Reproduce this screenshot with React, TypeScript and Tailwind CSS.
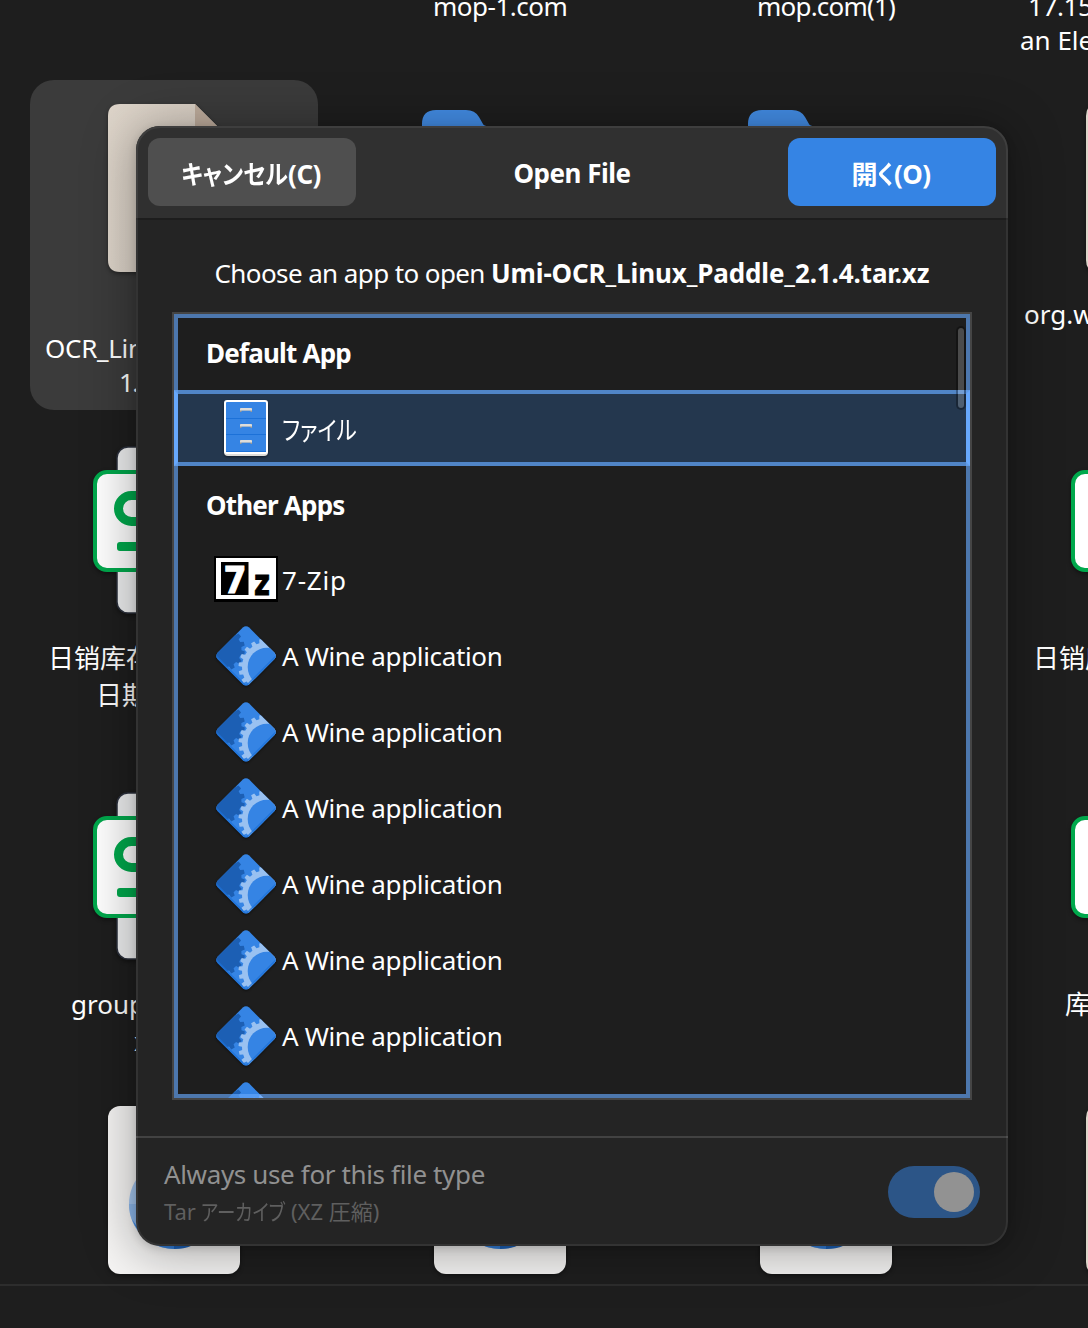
import type { ReactNode } from "react";

function gearPath(cx: number, cy: number, inner: number, outer: number, teeth: number, phase = 0) {
  const step = (Math.PI * 2) / teeth;
  const pts: string[] = [];
  for (let i = 0; i < teeth; i++) {
    const a = i * step + phase;
    const spots: [number, number][] = [
      [inner, a - step * 0.3],
      [outer, a - step * 0.2],
      [outer, a + step * 0.2],
      [inner, a + step * 0.3],
    ];
    for (const [r, t] of spots) {
      pts.push(`${(cx + r * Math.cos(t)).toFixed(2)} ${(cy + r * Math.sin(t)).toFixed(2)}`);
    }
  }
  return `M${pts.join("L")}Z`;
}

const LIGHT_GEAR = gearPath(53, 43, 25, 28.5, 20, 0.1);
const DARK_GEAR = gearPath(9, 25, 18.5, 22, 14, 0.2);
const DIAMOND = "M28.8 3.6Q32 .9 35.2 3.6L60.2 28.6Q63.2 32 60.2 35.2L35.2 60.2Q32 63 28.8 60.2L3.8 35.2Q.8 32 3.8 28.6Z";

function WineIcon() {
  return (
    <svg className="size-16 shrink-0 drop-shadow-[0_1px_1px_rgba(0,0,0,0.5)]" viewBox="0 0 64 64">
      <defs>
        <clipPath id="diamond">
          <path d={DIAMOND} />
        </clipPath>
      </defs>
      <g clipPath="url(#diamond)">
        <rect width="64" height="64" fill="#3584e4" />
        <path d={DARK_GEAR} fill="#1c5fb4" />
        <path d={LIGHT_GEAR} fill="#99c1f1" />
        <circle cx="53" cy="43" r="19.3" fill="#3584e4" />
        <path d="M1 32L32 63L63 32" fill="none" stroke="#1c71d8" strokeOpacity=".75" strokeWidth="3" />
      </g>
    </svg>
  );
}

function SevenZipIcon() {
  return (
    <svg className="size-16 shrink-0" viewBox="0 0 64 64">
      <rect x="0" y="8" width="64" height="46" fill="#000" />
      <rect x="2" y="10" width="60" height="41" fill="#fff" />
      <rect x="7" y="14" width="27.500" height="33" fill="#000" />
      <text x="9.500" y="44.500" fontFamily="DejaVu Sans" fontWeight="700" fontSize="37" textLength="23" lengthAdjust="spacingAndGlyphs" fill="#fff" stroke="#fff">7</text>
      <text x="40" y="46.500" fontFamily="DejaVu Sans" fontWeight="700" fontSize="36" textLength="16" lengthAdjust="spacingAndGlyphs" fill="#000" stroke="#000">z</text>
    </svg>
  );
}

function FilesIcon() {
  return (
    <svg className="size-16 shrink-0 drop-shadow-[0_1px_1px_rgba(0,0,0,0.5)]" viewBox="0 0 64 64">
      <rect x="10" y="6" width="44" height="54" rx="4" fill="#deddda" />
      <rect x="10" y="4" width="44" height="54" rx="3" fill="#fff" />
      <rect x="12" y="6" width="40" height="50" rx="1" fill="#3584e4" />
      <path d="M12 22.500H52M12 38.500H52M12 55.500H52" stroke="#1c71d8" />
      {[12, 28, 44].map((y) => (
        <g key={y}>
          <path d={`M26 ${y + 4}v-3q0-1 1-1h10q1 0 1 1v3h-1.500v-1.500h-9v1.500z`} fill="#9a9996" />
          <path d={`M26 ${y + 2.5}v-1.500q0-1 1-1h10q1 0 1 1v1.500z`} fill="#deddda" />
        </g>
      ))}
    </svg>
  );
}

function BeigePage() {
  return (
    <svg className="h-[168px] w-[132px] drop-shadow-[0_2px_2px_rgba(0,0,0,0.4)]" viewBox="0 0 132 168">
      <defs>
        <linearGradient id="paper" x1="0" y1="0" x2="1" y2="0">
          <stop offset="0" stopColor="#ded5ca" />
          <stop offset="1" stopColor="#d9cfc4" />
        </linearGradient>
      </defs>
      <path d="M12 0H87L132 45V156Q132 168 120 168H12Q0 168 0 156V12Q0 0 12 0Z" fill="url(#paper)" />
      <path d="M87 0L132 45H87Z" fill="#c0ae9e" />
    </svg>
  );
}

function FolderIcon() {
  return (
    <svg className="h-[168px] w-[156px]" viewBox="0 0 156 168">
      <path d="M0 148V20Q0 6 14 6H44Q53 6 57 13L61 20Q62 22 66 22H142Q156 22 156 36V148Q156 160 144 160H12Q0 160 0 148Z" fill="#438de6" />
    </svg>
  );
}

function SheetIcon() {
  return (
    <svg className="h-[168px] w-[162px] drop-shadow-[0_2px_2px_rgba(0,0,0,0.4)]" viewBox="0 0 162 168">
      <rect x="24" y="1" width="114" height="166" rx="11" fill="#eff0f1" stroke="#2c313d" strokeWidth="1.500" />
      <rect x="2" y="26" width="158" height="98" rx="12" fill="#fff" stroke="#00a84c" strokeWidth="4" />
      <path d="M70 49.500H38.500a13 13 0 0 0 0 26H70" fill="none" stroke="#00a84c" strokeWidth="9" />
      <rect x="24" y="96" width="100" height="9" rx="3" fill="#00a84c" />
    </svg>
  );
}

function WebPage() {
  return (
    <svg className="h-[168px] w-[132px] drop-shadow-[0_2px_2px_rgba(0,0,0,0.4)]" viewBox="0 0 132 168">
      <rect width="132" height="168" rx="12" fill="#f6f5f4" />
      <circle cx="66" cy="98" r="45" fill="#a6c8f2" />
      <path d="M21 98a45 45 0 0 0 90 0Z" fill="#8db8ec" />
      <path d="M24 113q3 5 9 13q14 10 33 8v9A45 45 0 0 1 24 113Z" fill="#3584e4" />
      <path d="M66 130h30q-10 13-30 13Z" fill="#1c65c0" />
    </svg>
  );
}

type Line = [string, string];

function Cell({ icon, lines, selected, top = "mt-[26px]" }: { icon: ReactNode; lines: Line[]; selected?: boolean; top?: string }) {
  return (
    <div className={`h-full w-72 shrink-0 rounded-3xl pt-6 ${selected ? "bg-[#3b3b3b]" : ""}`}>
      <div className="flex h-[168px] justify-center">{icon}</div>
      <div className={top}>
        {lines.map(([text, cls]) => (
          <div key={text} className={`whitespace-nowrap ${cls}`}>
            {text}
          </div>
        ))}
      </div>
    </div>
  );
}

function Row({ height, children }: { height: string; children: ReactNode }) {
  return <div className={`flex shrink-0 gap-[38px] pl-[30px] ${height}`}>{children}</div>;
}

function Blank() {
  return <div className="w-72 shrink-0" />;
}

function FileGrid() {
  return (
    <div className="flex h-[1284px] flex-col gap-3 overflow-hidden">
      <Row height="h-[68px]">
        <Blank />
        <div className="-mt-[11px] w-72 shrink-0 pl-[77px] leading-[34px] tracking-[-0.5px]">mop-1.com</div>
        <div className="-mt-[11px] w-72 shrink-0 pl-[75px] leading-[34px] tracking-[-0.8px]">mop.com(1)</div>
        <div className="-mt-[11px] w-72 shrink-0 leading-[34px]">
          <div className="pl-[20px] tracking-[-0.4px]">17.15-Why</div>
          <div className="pl-3">an Electron</div>
        </div>
      </Row>
      <Row height="h-[330px]">
        <Cell
          selected
          icon={<BeigePage />}
          top="mt-[25px]"
          lines={[
            ["Umi-", "pl-[115px] leading-[34px]"],
            ["OCR_Linux_Pa", "pl-[15px] leading-[34px] tracking-[-0.3px]"],
            ["1.4.tar.xz", "pl-[89px] leading-[34px] tracking-[-1.5px]"],
          ]}
        />
        <Cell icon={<FolderIcon />} lines={[]} />
        <Cell icon={<FolderIcon />} lines={[]} />
        <Cell icon={<BeigePage />} top="mt-[25px]" lines={[["org.wine", "pl-[16px] leading-[34px]"]]} />
      </Row>
      <Row height="h-[334px]">
        <Cell icon={<SheetIcon />} lines={[["日销库存表格", "pl-[18px] leading-[37px]"], ["日期表", "pl-[66px] leading-[37px]"]]} />
        <Blank />
        <Blank />
        <Cell icon={<SheetIcon />} lines={[["日销库存", "pl-[25px] leading-[37px]"]]} />
      </Row>
      <Row height="h-[302px]">
        <Cell icon={<SheetIcon />} lines={[["group_export", "pl-[41px] leading-[37px]"], ["xlsx", "pl-[104px] leading-[37px]"]]} />
        <Blank />
        <Blank />
        <Cell icon={<SheetIcon />} lines={[["库存", "pl-[57px] leading-[37px]"]]} />
      </Row>
      <Row height="h-[202px]">
        <Cell icon={<WebPage />} lines={[]} />
        <Cell icon={<WebPage />} lines={[]} />
        <Cell icon={<WebPage />} lines={[]} />
        <Cell icon={<BeigePage />} lines={[]} />
      </Row>
    </div>
  );
}

function Heading({ children }: { children: ReactNode }) {
  return <div className="flex h-[76px] shrink-0 items-center pt-0.5 pl-8 font-bold tracking-[-0.8px]">{children}</div>;
}

function AppRow({ icon, selected, children }: { icon: ReactNode; selected?: boolean; children: ReactNode }) {
  return (
    <div
      className={`flex h-[76px] shrink-0 items-center gap-1 border-4 pl-9 ${
        selected ? "border-x-[#69a8ff] border-y-[#5085c7] bg-[#24374e]" : "border-transparent"
      }`}
    >
      {icon}
      {children}
    </div>
  );
}

/* Kana set with proportional metrics in a condensed width. */
function Kana({ width, scale, children }: { width: string; scale: string; children: string }) {
  return (
    <span className={`inline-block whitespace-nowrap ${width}`}>
      <span className={`inline-block origin-left tracking-normal [font-feature-settings:'palt'] ${scale}`}>{children}</span>
    </span>
  );
}

function OpenDialog() {
  return (
    <div className="absolute top-[126px] left-[136px] flex h-[1120px] w-[872px] flex-col overflow-hidden rounded-3xl bg-[#242424]">
      <header className="flex h-[92px] shrink-0 items-center justify-between bg-[#303030] px-3 font-bold">
        <button className="flex h-[68px] w-52 items-center justify-center rounded-xl bg-[#4f4f4f] pt-1 pr-0.5 tracking-[-0.5px]">
          <Kana width="w-[107px]" scale="scale-x-[0.89]">キャンセル</Kana>(C)
        </button>
        <span className="pt-0.5 tracking-[-0.5px]">Open File</span>
        <button className="flex h-[68px] w-52 items-center justify-center rounded-xl bg-[#3584e4] pt-1 pr-0.5 tracking-[-0.5px]">
          開<Kana width="w-[17px]" scale="scale-x-[0.85]">く</Kana>(O)
        </button>
      </header>
      <div className="h-0.5 shrink-0 bg-[#1d1d1d]" />
      <p className="mt-9 text-center leading-[34px] tracking-[-0.6px] whitespace-nowrap">
        Choose an app to open <b className="tracking-[-0.12px]">Umi-OCR_Linux_Paddle_2.1.4.tar.xz</b>
      </p>
      <div className="relative mx-9 mt-[22px] flex h-[788px] shrink-0 flex-col overflow-hidden border-2 border-[#454545] bg-[#1e1e1e]">
        <Heading>Default App</Heading>
        <AppRow selected icon={<FilesIcon />}>
          <span className="pt-1">
            <Kana width="w-[76px]" scale="scale-x-[0.83]">ファイル</Kana>
          </span>
        </AppRow>
        <Heading>Other Apps</Heading>
        <AppRow icon={<SevenZipIcon />}>
          <span className="tracking-[0.8px]">7-Zip</span>
        </AppRow>
        {[0, 1, 2, 3, 4, 5, 6].map((i) => (
          <AppRow key={i} icon={<WineIcon />}>
            <span className="tracking-[-0.35px]">A Wine application</span>
          </AppRow>
        ))}
        <div className="absolute inset-0 border-4 border-[#67a8fa]/65" />
        <div className="absolute top-3 right-1 h-[84px] w-2.5 rounded-full border-2 border-black/30 bg-white/20 bg-clip-padding" />
      </div>
      <footer className="mt-9 flex flex-1 items-center justify-between border-t-2 border-[#424242] px-7">
        <div>
          <div className="leading-[38px] tracking-[-0.36px] text-[#919191]">Always use for this file type</div>
          <div className="flex text-[22px] leading-9 text-[#5f5f5f]">
            <span className="w-[37px]">Tar</span>
            <Kana width="w-[90px]" scale="scale-x-[0.84]">アーカイブ</Kana>
            <span>(XZ 圧縮)</span>
          </div>
        </div>
        <div className="flex h-[52px] w-[92px] items-center justify-end rounded-full bg-[#2c5587] pr-1.5">
          <div className="size-10 rounded-full bg-[#929292]" />
        </div>
      </footer>
      <div className="pointer-events-none absolute inset-0 rounded-3xl border-2 border-white/7" />
    </div>
  );
}

export default function App() {
  return (
    <div className="relative h-[1328px] w-[1088px] overflow-hidden bg-[#1e1e1e] font-['Noto_Sans','Noto_Sans_CJK_JP',sans-serif] text-[26px] text-white">
      <FileGrid />
      <div className="h-11 border-t-2 border-[#2d2d2d]" />
      <div className="absolute top-[126px] left-[136px] h-[1120px] w-[872px] rounded-3xl shadow-[0_4px_50px_6px_rgba(0,0,0,0.3),0_2px_8px_rgba(0,0,0,0.15)]" />
      <OpenDialog />
    </div>
  );
}
